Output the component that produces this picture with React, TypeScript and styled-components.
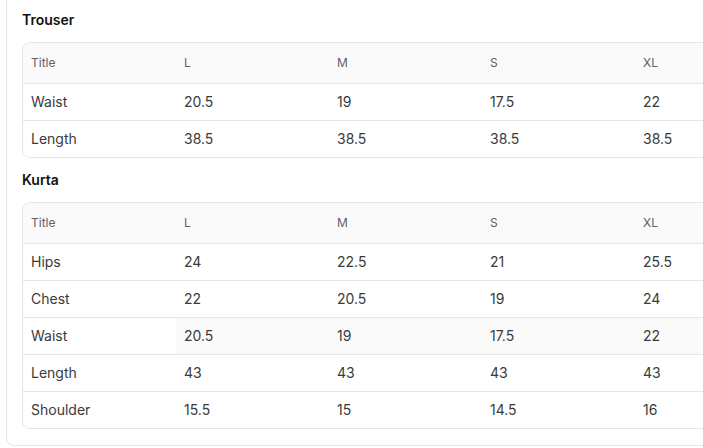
import React from "react";
import styled, { createGlobalStyle } from "styled-components";

const GlobalStyle = createGlobalStyle`
  html, body {
    margin: 0;
    padding: 0;
    background: #ffffff;
    overflow: hidden;
    width: 703px;
    height: 448px;
  }
  body {
    font-family: Inter, "Noto Sans", "Liberation Sans", sans-serif;
    -webkit-font-smoothing: antialiased;
  }
`;

const Page = styled.div`
  width: 703px;
  height: 448px;
  overflow: hidden;
`;

const Card = styled.div`
  margin-left: 6px;
  width: 820px;
  border: 1px solid #e6e6e6;
  border-top: none;
  border-radius: 0 0 8px 8px;
  padding: 10px 15px 16px;
  box-sizing: border-box;
  background: #fff;
`;

const Section = styled.section`
  & + & {
    margin-top: 12px;
  }
`;

const SectionTitle = styled.h3`
  margin: 0 0 12px;
  font-size: 14px;
  line-height: 20px;
  font-weight: 600;
  color: #111111;
`;

const TableWrap = styled.div`
  width: 767px;
  border: 1px solid #e5e5e5;
  border-radius: 8px;
  overflow: hidden;
`;

const Table = styled.table`
  border-collapse: collapse;
  table-layout: fixed;
  width: 765px;
`;

const HeadCell = styled.th`
  width: 153px;
  height: 40px;
  padding: 0 8px;
  box-sizing: border-box;
  text-align: left;
  background: #fafafa;
  font-size: 12px;
  font-weight: 400;
  color: #5f5f5f;
  border-bottom: 1px solid #e5e5e5;
`;

const Row = styled.tr<{ $hover?: boolean }>`
  & > td {
    border-bottom: 1px solid #e5e5e5;
  }
  &:last-child > td {
    border-bottom: none;
  }
  & > td + td {
    background: ${(p) => (p.$hover ? "#fafafa" : "#ffffff")};
  }
`;

const Cell = styled.td`
  height: 37px;
  padding: 0 8px;
  box-sizing: border-box;
  font-size: 14px;
  color: #3a3a3a;
  background: #ffffff;
`;

type Chart = {
  title: string;
  rows: { name: string; values: string[]; hover?: boolean }[];
};

const sizes = ["L", "M", "S", "XL"];

const charts: Chart[] = [
  {
    title: "Trouser",
    rows: [
      { name: "Waist", values: ["20.5", "19", "17.5", "22"] },
      { name: "Length", values: ["38.5", "38.5", "38.5", "38.5"] },
    ],
  },
  {
    title: "Kurta",
    rows: [
      { name: "Hips", values: ["24", "22.5", "21", "25.5"] },
      { name: "Chest", values: ["22", "20.5", "19", "24"] },
      { name: "Waist", values: ["20.5", "19", "17.5", "22"], hover: true },
      { name: "Length", values: ["43", "43", "43", "43"] },
      { name: "Shoulder", values: ["15.5", "15", "14.5", "16"] },
    ],
  },
];

export default function App() {
  return (
    <Page>
      <GlobalStyle />
      <Card>
        {charts.map((c) => (
          <Section key={c.title}>
            <SectionTitle>{c.title}</SectionTitle>
            <TableWrap>
              <Table>
                <thead>
                  <tr>
                    <HeadCell>Title</HeadCell>
                    {sizes.map((s) => (
                      <HeadCell key={s}>{s}</HeadCell>
                    ))}
                  </tr>
                </thead>
                <tbody>
                  {c.rows.map((r) => (
                    <Row key={r.name} $hover={r.hover}>
                      <Cell>{r.name}</Cell>
                      {r.values.map((v, i) => (
                        <Cell key={i}>{v}</Cell>
                      ))}
                    </Row>
                  ))}
                </tbody>
              </Table>
            </TableWrap>
          </Section>
        ))}
      </Card>
    </Page>
  );
}
